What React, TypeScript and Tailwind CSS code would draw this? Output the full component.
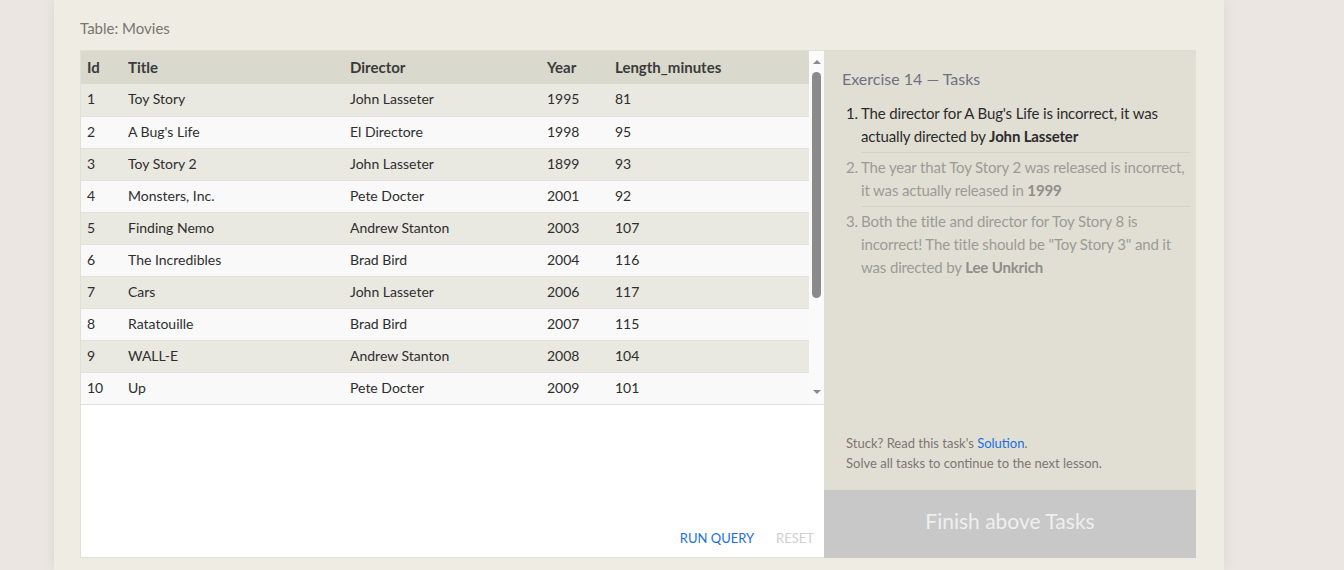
import React from 'react';

const movies = [
    { id: 1, title: 'Toy Story', director: 'John Lasseter', year: 1995, length: 81 },
    { id: 2, title: "A Bug's Life", director: 'El Directore', year: 1998, length: 95 },
    { id: 3, title: 'Toy Story 2', director: 'John Lasseter', year: 1899, length: 93 },
    { id: 4, title: 'Monsters, Inc.', director: 'Pete Docter', year: 2001, length: 92 },
    { id: 5, title: 'Finding Nemo', director: 'Andrew Stanton', year: 2003, length: 107 },
    { id: 6, title: 'The Incredibles', director: 'Brad Bird', year: 2004, length: 116 },
    { id: 7, title: 'Cars', director: 'John Lasseter', year: 2006, length: 117 },
    { id: 8, title: 'Ratatouille', director: 'Brad Bird', year: 2007, length: 115 },
    { id: 9, title: 'WALL-E', director: 'Andrew Stanton', year: 2008, length: 104 },
    { id: 10, title: 'Up', director: 'Pete Docter', year: 2009, length: 101 },
];

const tasks = [
    {
        done: false,
        text: "The director for A Bug's Life is incorrect, it was actually directed by ",
        bold: 'John Lasseter',
    },
    {
        done: true,
        text: 'The year that Toy Story 2 was released is incorrect, it was actually released in ',
        bold: '1999',
    },
    {
        done: true,
        text: 'Both the title and director for Toy Story 8 is incorrect! The title should be "Toy Story 3" and it was directed by ',
        bold: 'Lee Unkrich',
    },
];

const MovieTable: React.FC = () => (
    <table className="w-full border-collapse text-left">
        <thead>
            <tr className="h-[33px] bg-[#dad9cd] text-[15px] font-bold text-[#3b3b3b]">
                <th className="w-[47px] pl-[6px] font-bold">Id</th>
                <th className="w-[222px] font-bold">Title</th>
                <th className="w-[197px] font-bold">Director</th>
                <th className="w-[68px] font-bold">Year</th>
                <th className="font-bold">Length_minutes</th>
            </tr>
        </thead>
        <tbody>
            {movies.map((m, i) => (
                <tr
                    key={m.id}
                    className={`h-[32px] border-b border-[#e2e1da] text-[14px] text-[#2e2e2e] ${
                        i % 2 === 0 ? 'bg-[#e9e8e1]' : 'bg-[#f9f9f9]'
                    }`}
                >
                    <td className="pl-[6px] pb-[2px]">{m.id}</td>
                    <td className="pb-[2px]">{m.title}</td>
                    <td className="pb-[2px]">{m.director}</td>
                    <td className="pb-[2px]">{m.year}</td>
                    <td className="pb-[2px]">{m.length}</td>
                </tr>
            ))}
        </tbody>
    </table>
);

const FakeScrollbar: React.FC = () => (
    <div className="flex w-[15px] flex-col items-center bg-[#fafafa] pt-[9px] pb-[10px]">
        <div className="h-0 w-0 border-x-[4px] border-b-[4px] border-x-transparent border-b-[#8a8a8a]" />
        <div className="mt-[8px] h-[226px] w-[9px] rounded-full bg-[#8a8a8a]" />
        <div className="flex-1" />
        <div className="h-0 w-0 border-x-[4px] border-t-[4px] border-x-transparent border-t-[#8a8a8a]" />
    </div>
);

const TaskPanel: React.FC = () => (
    <div className="flex w-[372px] flex-col bg-[#e1dfd4]">
        <div className="flex-1 pt-[19px] pl-[18px] pr-[6px]">
            <div className="text-[16px] leading-[20px] text-[#6e7183]">Exercise 14 — Tasks</div>
            <ol className="mt-[13px]">
                {tasks.map((t, i) => (
                    <li key={i} className="flex text-[15px] leading-[23px] tracking-[-0.15px]">
                        <span className={`w-[19px] shrink-0 pl-[4px] ${t.done ? 'text-[#9b9b96]' : 'text-[#2b2b2b]'}`}>
                            {i + 1}.
                        </span>
                        <span
                            className={`flex-1 ${
                                i < tasks.length - 1 ? 'border-b border-[#d3d1c6] pb-[4px] mb-[3px]' : ''
                            } ${t.done ? 'text-[#9b9b96]' : 'text-[#2b2b2b]'}`}
                        >
                            {t.text}
                            <b className={t.done ? 'text-[#8e8e8a]' : 'text-[#2b2b2b]'}>{t.bold}</b>
                        </span>
                    </li>
                ))}
            </ol>
        </div>
        <div className="pl-[22px] pb-[17px] text-[13px] leading-[20px] text-[#7d7573]">
            <div>
                Stuck? Read this task's <span className="text-[#1a6fe0]">Solution</span>.
            </div>
            <div>Solve all tasks to continue to the next lesson.</div>
        </div>
        <div className="flex h-[68px] items-center justify-center bg-[#c8c8c8] pb-[6px] text-[21px] text-[#efefef]">
            Finish above Tasks
        </div>
    </div>
);

export default function App() {
    return (
        <div
            className="flex min-h-[570px] bg-[#ebe6e2] pl-[54px]"
            style={{ fontFamily: 'Lato, "Open Sans", sans-serif' }}
        >
            <div className="h-[570px] w-[1170px] bg-[#efece4] pt-[18px] pl-[26px] shadow-[0_0_14px_rgba(0,0,0,0.07)]">
                <div className="text-[15px] leading-[20px] text-[#77776f]">Table: Movies</div>
                <div className="mt-[12px] flex h-[508px] w-[1116px]">
                    <div className="flex w-[744px] flex-col border border-r-0 border-[#e2dfd7] bg-white">
                        <div className="flex h-[354px] overflow-hidden border-b border-[#e2e1da]">
                            <div className="flex-1">
                                <MovieTable />
                            </div>
                            <FakeScrollbar />
                        </div>
                        <div className="flex flex-1 items-end justify-end gap-[22px] pr-[10px] pb-[9px] text-[13px]">
                            <span className="text-[#1a6fe0]">RUN QUERY</span>
                            <span className="text-[#cfcfcf]">RESET</span>
                        </div>
                    </div>
                    <TaskPanel />
                </div>
            </div>
        </div>
    );
}
